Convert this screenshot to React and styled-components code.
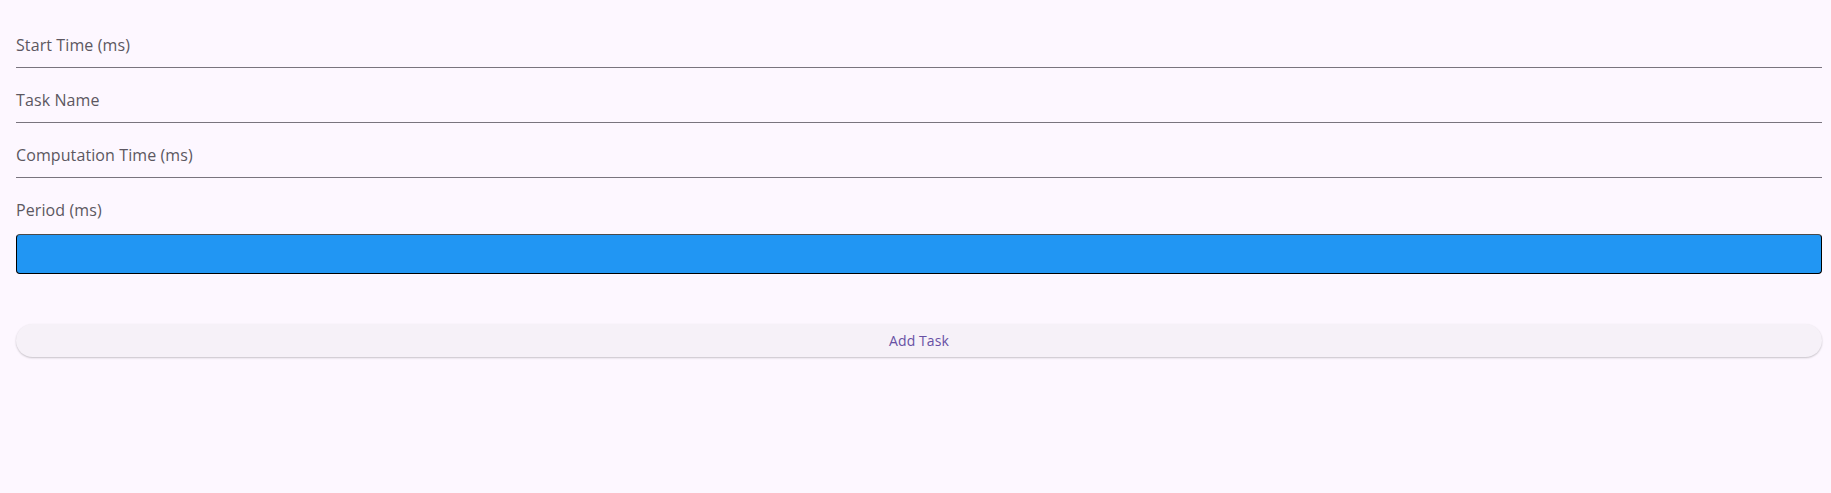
import React from "react";
import styled, { createGlobalStyle } from "styled-components";

const GlobalStyle = createGlobalStyle`
  html, body {
    margin: 0;
    padding: 0;
    background: #fdf7ff;
    font-family: "Open Sans", "Noto Sans", sans-serif;
  }
`;

const Page = styled.div`
  width: 1831px;
  height: 493px;
  box-sizing: border-box;
  padding: 13px 9px 0 16px;
  background: #fdf7ff;
`;

const Form = styled.form`
  display: flex;
  flex-direction: column;
  width: 1806px;
`;

const Field = styled.div`
  display: flex;
  flex-direction: column;
  border-bottom: ${props => (props.boxed ? "none" : "1px solid #79747e")};
  padding: ${props => (props.boxed ? "20px 0 0" : "20px 0 10px")};
`;

const Label = styled.label`
  display: block;
  font-size: 16px;
  line-height: 24px;
  color: #5c5761;
  letter-spacing: 0.1px;
`;

const FocusBox = styled.div`
  margin-top: 12px;
  height: 40px;
  box-sizing: border-box;
  background: #2196f3;
  border: 1px solid #000;
  border-top-color: #4a4a4a;
  border-radius: 4px;
`;

const Button = styled.button`
  margin-top: 50px;
  height: 33px;
  width: 100%;
  border: none;
  border-radius: 17px;
  background: #f6f1f8;
  box-shadow: 0 1px 2px rgba(0, 0, 0, 0.22);
  color: #6750a4;
  font-family: "Open Sans", "Noto Sans", sans-serif;
  font-size: 14px;
  letter-spacing: 0.1px;
  cursor: pointer;
`;

const fields = ["Start Time (ms)", "Task Name", "Computation Time (ms)"];

export default function App() {
  return (
    <>
      <GlobalStyle />
      <Page>
        <Form onSubmit={e => e.preventDefault()}>
          {fields.map(f => (
            <Field key={f}>
              <Label>{f}</Label>
            </Field>
          ))}
          <Field boxed>
            <Label>Period (ms)</Label>
            <FocusBox />
          </Field>
          <Button type="submit">Add Task</Button>
        </Form>
      </Page>
    </>
  );
}
